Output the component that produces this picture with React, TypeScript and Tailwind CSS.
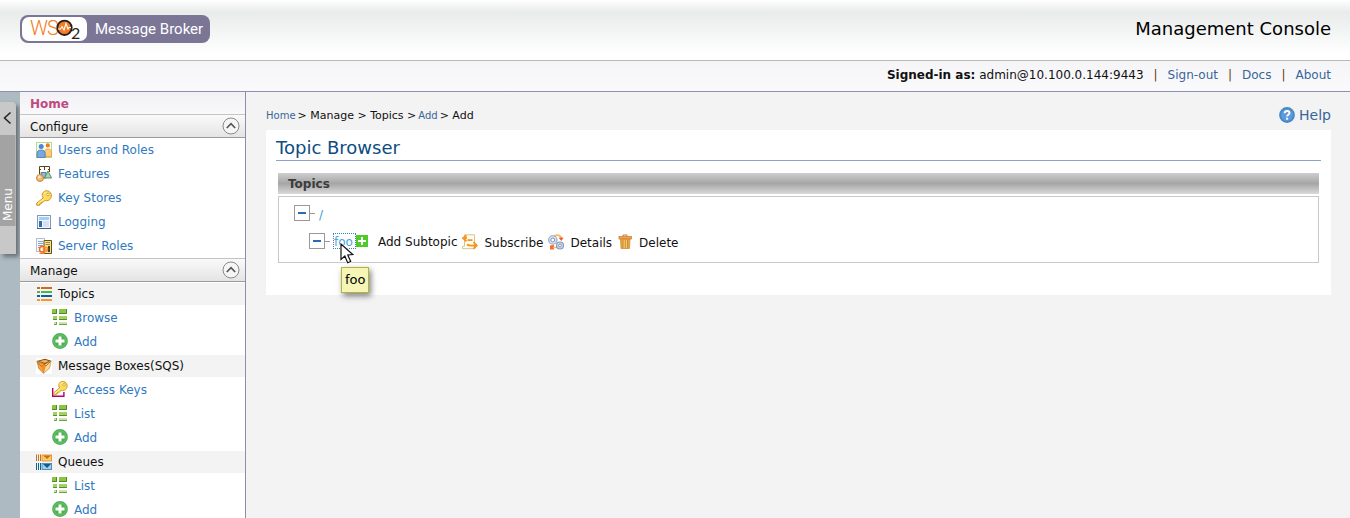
import type { ReactNode } from "react";

type IconProps = { className?: string };

function Svg({ children, size = "size-4" }: { children: ReactNode; size?: string }) {
  return (
    <svg viewBox="0 0 16 16" aria-hidden="true" className={`${size} shrink-0`}>
      {children}
    </svg>
  );
}

const UsersIcon = () => (
  <Svg>
    <rect x="0.5" y="0.5" width="15" height="15" fill="#fbfff5" stroke="#b5dc8e" />
    <circle cx="5.2" cy="4.5" r="2.5" fill="#4a8bd0" />
    <circle cx="11.8" cy="3.4" r="2.1" fill="#f07a1e" />
    <path d="M8.5 14.500V10c0-2 1.200-3 3.400-3s3.600 1 3.600 3v4.500z" fill="#ffcb74" stroke="#ef9a35" strokeWidth="0.8" />
    <path d="M1 15.600v-4c0-2.400 1.500-3.600 4.100-3.600s4.100 1.200 4.100 3.600v4z" fill="#7aa7de" stroke="#3c74b8" strokeWidth="0.8" />
  </Svg>
);

const FeaturesIcon = () => (
  <Svg>
    <path d="M3.500 8V.5h10V6M8.500.5V4M3.500 3.500h1.500M12 3.500h1.500" fill="none" stroke="#604016" />
    <path d="M5 6.500h5v5.500H5z" fill="#8dbbe0" stroke="#35688f" strokeWidth="0.8" />
    <path d="M12 5l3.600 7H8.500z" fill="#a8d3b0" stroke="#3f7a52" strokeWidth="0.8" />
    <circle cx="4" cy="12" r="3.500" fill="#f4b872" stroke="#b8742a" strokeWidth="0.8" />
    <circle cx="3.200" cy="11" r="1.400" fill="#fde5c4" />
  </Svg>
);

const KeyShape = () => (
  <>
    <path
      d="M7.200 7.900.7 13.200v2h3v-1.300h1.500v-1.400h1.600l2-2c2.200.7 4.600-.1 5.900-2.100 1.400-2.300.8-5.300-1.400-6.900C11 .1 8.100.6 6.900 2.900c-1 1.700-.8 3.500.3 5z"
      fill="#ffdc58"
      stroke="#c4952e"
    />
    <path d="M7.800 4.200c.5-1.300 1.400-2 2.800-2.100M2 13.500l5.500-4.500" stroke="#fff3ae" fill="none" />
    <circle cx="12" cy="4.500" r="1.300" fill="#fff" stroke="#b6892a" strokeWidth="0.7" />
  </>
);

const KeyIcon = () => (
  <Svg>
    <KeyShape />
  </Svg>
);

const AccessKeyIcon = () => (
  <Svg>
    <path d="M.7 7v8.300h11.200V11" fill="none" stroke="#b3006b" strokeWidth="1.400" />
    <g transform="translate(1 -0.300) scale(0.920)">
      <KeyShape />
    </g>
  </Svg>
);

const LoggingIcon = () => (
  <Svg>
    <rect x="1.500" y="1.500" width="13" height="13" fill="#f3f8ff" stroke="#8298b8" />
    <path d="M1 14.500h14" stroke="#465f8a" />
    <rect x="3" y="3" width="10" height="3" fill="#a3cdf5" />
    <rect x="3" y="7" width="3" height="6" fill="#346cb0" />
    <rect x="7" y="7" width="6" height="6" fill="#d5e2f3" />
  </Svg>
);

const ServerRolesIcon = () => (
  <Svg>
    <rect x="0.500" y="0.500" width="8" height="13" fill="#f7faff" stroke="#b3c0d2" />
    <path d="M2 3.500h5M2 5.500h5M2 7.500h5M2 9.500h2" stroke="#86a2c6" />
    <path d="M8 2.500h7.500v13H8z" fill="#f8e08c" stroke="#63531a" />
    <path d="M9.500 4.500h4.500M9.500 6.500h4.500M10 12h3" stroke="#a08a3a" />
    <rect x="12" y="8" width="2" height="6" fill="#4a3e14" />
    <circle cx="6.200" cy="11.300" r="2.700" fill="none" stroke="#f26a1b" strokeWidth="1.500" />
    <path d="M3.500 15.300h5.500" stroke="#f26a1b" strokeWidth="1.200" />
    <circle cx="9.500" cy="11.300" r="2.200" fill="none" stroke="#f78d3d" strokeWidth="1.200" />
  </Svg>
);

const TopicsIcon = () => (
  <Svg>
    <path d="M1 2h3M5 2h11" stroke="#cf6c1c" strokeWidth="2" />
    <path d="M1 6h3M5 6h11" stroke="#4bb748" strokeWidth="2" />
    <path d="M1 10h3M5 10h11" stroke="#0960a8" strokeWidth="2" />
    <path d="M1 14h3M5 14h11" stroke="#f89a1f" strokeWidth="2" />
  </Svg>
);

const ListIcon = () => (
  <Svg>
    <path d="M0 0h5v5H0zM7 0h8v5H7z" fill="#8bc53f" />
    <path d="M0 4.500h4.500V0M7 4.500h7.500V0" fill="none" stroke="#4d8a2a" />
    <path d="M1 7h4v4H1zM7 7h8v4H7z" fill="#a5d163" />
    <path d="M1 10.500h4M7 10.500h8" stroke="#568f33" />
    <path d="M2 13h3v3H2zM7 13h8v3H7z" fill="#c9e5a4" />
    <path d="M2 15.500h2.500V13M7 15.500h8" fill="none" stroke="#6e9e4a" />
  </Svg>
);

const AddIcon = () => (
  <Svg>
    <circle cx="8" cy="8" r="7.900" fill="#4bb04f" />
    <circle cx="8" cy="8" r="6.200" fill="none" stroke="#72c474" />
    <path d="M8 3.500v9M3.500 8h9" stroke="#fff" strokeWidth="3" />
  </Svg>
);

const BoxIcon = () => (
  <Svg>
    <rect width="16" height="16" fill="#fff" />
    <path d="M.8 3 9 .8l6.200 2L9.500 6.500z" fill="#7a4618" />
    <path d="M3 3.200 9 1.800l4 1.200-4 2z" fill="#f0b45c" />
    <path d="M.8 3 9 6.300 7.500 15.300 2.800 10.500z" fill="#f9a13a" stroke="#a8641f" strokeWidth="0.600" />
    <path d="M15.200 2.800 9 6.300 7.500 15.300l6-5z" fill="#ffd98a" stroke="#b9772c" strokeWidth="0.600" />
    <path d="m1.500 4 4 4.500 3-2 1.500 1.500 4.500-4.500" fill="none" stroke="#8e4f1a" strokeWidth="0.700" />
    <path d="m5.500 8.500 2 5.500L10 8 8.500 6.500z" fill="#f68a2c" />
  </Svg>
);

const QueuesIcon = () => (
  <Svg>
    <path d="M.5 0.500v6.500M2.500 0.500v6.500M4.500 0.500v6.500" stroke="#cf6c1c" />
    <rect x="6" y="1" width="9.600" height="6" fill="#f7cf66" stroke="#e38b2e" strokeWidth="0.800" />
    <path d="M7 1.500h8L11 5z" fill="#cf6c1c" />
    <path d="M.5 9v7M2.500 9v7M4.500 9v7" stroke="#0a6794" />
    <rect x="6" y="9.500" width="9.600" height="6" fill="#a9cde6" stroke="#2e7fac" strokeWidth="0.800" />
    <path d="M7 10h8l-4 4z" fill="#075f8e" />
  </Svg>
);

const PlusIcon = () => (
  <svg viewBox="0 0 12 12" aria-hidden="true" className="size-3 shrink-0">
    <rect width="12" height="12" fill="#4ccb29" />
    <path d="M6 2v8M2 6h8" stroke="#fff" strokeWidth="2" />
  </svg>
);

const SubscribeIcon = () => (
  <Svg>
    <path d="M2.500.8h10v11.700l-1 2.200h-11v-2.500h2z" fill="#fffdf4" stroke="#d9c48c" />
    <path d="M4.500 1.500 1 4.200l3.500 3M1 4.200h4M5.500 6.200h5" fill="none" stroke="#f7941d" strokeWidth="1.800" />
    <path d="M5 10.500c1.500 1.500 4 1 6.500 1h3M11.500 8l3.300 3.500-3.300 3.300" fill="none" stroke="#f7941d" strokeWidth="1.800" />
  </Svg>
);

const DetailsIcon = () => (
  <Svg>
    <path d="M6.500 1.800c4-1.500 6.500 0 7 3.200" fill="none" stroke="#fbb85c" strokeWidth="1.800" />
    <path d="m10.500 3.800 5-.300-2 3.500z" fill="#ee5a38" />
    <path d="M2 11.500 6 11v4.500H2z" fill="#f26b3c" />
    <path d="M5 13.500h4" stroke="#fbb85c" strokeWidth="1.600" />
    <circle cx="4.800" cy="6" r="4.200" fill="#d8e2f1" stroke="#8fa3c4" strokeWidth="1.100" />
    <circle cx="4.800" cy="6" r="1.900" fill="#fff" stroke="#7f95ba" />
    <circle cx="12" cy="11.500" r="3.500" fill="#cdd9ea" stroke="#8398bb" strokeWidth="1.100" />
    <circle cx="12" cy="11.500" r="1.400" fill="#fff" stroke="#7f95ba" />
  </Svg>
);

const TrashIcon = () => (
  <Svg>
    <path d="M6 2.500V1h4v1.500" fill="none" stroke="#c87624" />
    <rect x="2" y="2.500" width="12.500" height="2.500" fill="#f1a451" stroke="#cb7526" strokeWidth="0.700" />
    <path d="M3.500 5h9.500l-.500 9.500h-8.500z" fill="#e6a445" stroke="#ce8428" strokeWidth="0.700" />
    <path d="M6 6v8M8.200 6v8M10.500 6v8" stroke="#c08a30" strokeWidth="0.800" />
    <path d="M7.200 6v8M9.400 6v8" stroke="#f7d585" strokeWidth="0.800" />
  </Svg>
);

const HelpIcon = () => (
  <Svg>
    <circle cx="8" cy="8" r="7.900" fill="#4489cb" />
    <circle cx="8" cy="8" r="6" fill="#5d9ad6" />
    <path d="M5.700 6.300c0-1.500.9-2.300 2.400-2.300s2.400.8 2.400 2c0 1.800-2.400 1.800-2.400 3.600" fill="none" stroke="#fff" strokeWidth="1.900" />
    <rect x="7.100" y="10.700" width="2" height="2" fill="#fff" />
  </Svg>
);

const CollapseIcon = () => (
  <svg viewBox="0 0 18 18" aria-hidden="true" className="size-[18px]">
    <circle cx="9" cy="9" r="8" fill="#f5f5f5" stroke="#8a8a8a" />
    <path d="m4.800 11 4.200-4.300 4.200 4.300" fill="none" stroke="#555" strokeWidth="1.700" />
  </svg>
);

const CursorIcon = ({ className }: IconProps) => (
  <svg viewBox="0 0 14 22" aria-hidden="true" className={className}>
    <path d="M1 1v15.500l3.800-3.400 2.900 6.700 3-1.300-2.900-6.500 5-.400z" fill="#111" stroke="#fff" strokeWidth="2.200" />
    <path d="M1 1v15.500l3.800-3.400 2.900 6.700 3-1.300-2.900-6.500 5-.400z" fill="#fff" stroke="#111" strokeWidth="1.200" />
  </svg>
);

function Logo() {
  return (
    <a href="#home" className="flex h-7 w-[190px] items-center rounded-[8px] bg-[#7b7596] p-[2px] text-white">
      <svg viewBox="0 0 65 24" role="img" aria-label="WSO2" className="h-6 w-[65px] shrink-0 rounded-[7px] bg-white">
        <g fill="#f47b20" fontFamily="Roboto, sans-serif" fontWeight="300" fontSize="20">
          <text x="8" y="17.500">W</text>
          <text x="25" y="17.500">S</text>
        </g>
        <circle cx="42.500" cy="10.800" r="7.200" fill="#f47b20" stroke="#231f20" strokeWidth="1.800" />
        <path d="M36 12h2.500l1.500-2.500 2 3.500L44 6.500l2 5.500 1-1.500h2" fill="none" stroke="#fff" strokeWidth="1.100" />
        <text x="49" y="21.500" fill="#231f20" fontFamily="Lato, sans-serif" fontSize="16">2</text>
      </svg>
      <span className="pl-2 font-[Roboto,sans-serif] text-[15px] whitespace-nowrap">Message Broker</span>
    </a>
  );
}

type Entry = { label: string; icon: ReactNode };

const configureItems: Entry[] = [
  { label: "Users and Roles", icon: <UsersIcon /> },
  { label: "Features", icon: <FeaturesIcon /> },
  { label: "Key Stores", icon: <KeyIcon /> },
  { label: "Logging", icon: <LoggingIcon /> },
  { label: "Server Roles", icon: <ServerRolesIcon /> },
];

const manageGroups: (Entry & { items: Entry[] })[] = [
  {
    label: "Topics",
    icon: <TopicsIcon />,
    items: [
      { label: "Browse", icon: <ListIcon /> },
      { label: "Add", icon: <AddIcon /> },
    ],
  },
  {
    label: "Message Boxes(SQS)",
    icon: <BoxIcon />,
    items: [
      { label: "Access Keys", icon: <AccessKeyIcon /> },
      { label: "List", icon: <ListIcon /> },
      { label: "Add", icon: <AddIcon /> },
    ],
  },
  {
    label: "Queues",
    icon: <QueuesIcon />,
    items: [
      { label: "List", icon: <ListIcon /> },
      { label: "Add", icon: <AddIcon /> },
    ],
  },
];

function SectionHeader({ title }: { title: string }) {
  return (
    <h2 className="flex h-6 items-center justify-between border-t border-b border-t-[#c4c4c8] border-b-[#9a9a9a] bg-linear-to-b from-[#fafafa] to-[#e4e4e4] pr-[5px] pl-[10px]">
      <span className="pt-px">{title}</span>
      <button type="button" aria-label={`Collapse ${title}`}>
        <CollapseIcon />
      </button>
    </h2>
  );
}

function MenuLink({ item, nested }: { item: Entry; nested?: boolean }) {
  return (
    <li>
      <a href="#item" className={`flex h-6 items-center gap-[6px] text-[#2f7abf] ${nested ? "pl-8" : "pl-4"}`}>
        {item.icon}
        <span className={nested ? "pt-px" : ""}>{item.label}</span>
      </a>
    </li>
  );
}

function Sidebar() {
  return (
    <nav className="w-[226px] shrink-0 overflow-hidden border-r border-[#8e8ca8] bg-white">
      <a href="#home" className="flex h-[22px] items-center bg-linear-to-b from-[#f1f1f5] to-[#f9f9fb] pt-px pl-[10px] font-bold text-[#c04a80]">
        Home
      </a>
      <SectionHeader title="Configure" />
      <ul>
        {configureItems.map((item) => (
          <MenuLink key={item.label} item={item} />
        ))}
      </ul>
      <SectionHeader title="Manage" />
      <ul className="flex flex-col gap-[2px] pt-px">
        {manageGroups.map((group) => (
          <li key={group.label}>
            <div className="flex h-[22px] items-center gap-[6px] bg-[#f3f3f3] pl-4">
              {group.icon}
              {group.label}
            </div>
            <ul>
              {group.items.map((item) => (
                <MenuLink key={item.label} item={item} nested />
              ))}
            </ul>
          </li>
        ))}
      </ul>
    </nav>
  );
}

function TreeToggle({ label }: { label: string }) {
  return (
    <span className="flex shrink-0 items-center">
      <button type="button" aria-label={label} className="flex size-4 items-center justify-center border border-[#999] bg-white">
        <span className="h-[2px] w-2 bg-[#2b6cb5]" />
      </button>
      <span className="h-px w-[5px] bg-[#999]" />
    </span>
  );
}

const Divider = () => <span className="text-[#5c3a10]">|</span>;

const actions: Entry[] = [
  { label: "Subscribe", icon: <SubscribeIcon /> },
  { label: "Details", icon: <DetailsIcon /> },
  { label: "Delete", icon: <TrashIcon /> },
];

export default function App() {
  return (
    <div className="flex h-screen flex-col overflow-hidden bg-[#f3f3f3] font-['DejaVu_Sans',sans-serif] text-[12px] leading-4 text-[#111]">
      <header className="shrink-0">
        <div className="flex h-[61px] items-start justify-between border-b border-[#b9b9b9] bg-[linear-gradient(to_bottom,#fff_0px,#e9ebea_12px,#fff_54px)] px-5 pt-[15px] pr-[19px]">
          <Logo />
          <h1 className="text-[18px] leading-7 text-black">Management Console</h1>
        </div>
        <div className="flex h-[31px] items-center justify-end gap-[10px] border-b border-[#8e8eae] bg-linear-to-b from-[#f5f5f8] to-[#fafafc] pr-[19px] pb-[3px]">
          <span>
            <strong>Signed-in as:</strong> admin@10.100.0.144:9443
          </span>
          <Divider />
          <a href="#signout" className="text-[#386698]">Sign-out</a>
          <Divider />
          <a href="#docs" className="text-[#386698]">Docs</a>
          <Divider />
          <a href="#about" className="text-[#386698]">About</a>
        </div>
      </header>

      <div className="flex min-h-0 flex-1">
        <div className="w-5 shrink-0 bg-[#adbac2] pt-[10px]">
          <button
            type="button"
            className="flex h-[152px] w-4 flex-col items-center rounded-tr-[4px] bg-[#c8c8c8] text-white shadow-[3px_3px_4px_rgba(0,0,0,0.4)]"
          >
            <svg viewBox="0 0 16 33" aria-hidden="true" className="h-[33px] w-4 shrink-0">
              <path d="m10.500 10.500-6 5.500 6 5.500" fill="none" stroke="#222" strokeWidth="1.500" />
            </svg>
            <span className="flex h-[91px] w-4 shrink-0 rotate-180 items-center border-l border-[#b4b4b4] bg-[#a3a3a3] pt-[5px] [writing-mode:vertical-rl]">
              <span className="w-full text-left">Menu</span>
            </span>
          </button>
        </div>
        <Sidebar />

        <main className="min-w-0 flex-1 pt-[14px] pr-[19px] pl-5">
          <div className="flex h-6 items-start justify-between">
            <nav aria-label="Breadcrumb" className="flex items-center gap-[2px] text-[11px] leading-[18px]">
              <a href="#home" className="text-[10px] text-[#386698]">Home</a>
              <span className="pt-px">&gt; Manage &gt; Topics &gt;</span>
              <a href="#add" className="pt-px text-[10px] text-[#386698]">Add</a>
              <span className="pt-px">&gt; Add</span>
            </nav>
            <a href="#help" className="flex items-center gap-1 text-[14px] leading-[18px] text-[#386698]">
              <HelpIcon />
              Help
            </a>
          </div>

          <section className="bg-white px-[10px] pb-8">
            <h2 className="h-[31px] border-b border-[#8fa3c6] pt-[6px] text-[18px] leading-6 text-[#0d4d81]">Topic Browser</h2>
            <div className="px-[2px] pt-3">
              <h3 className="flex h-[21px] items-center bg-[linear-gradient(to_bottom,#cecece,#a6a6a6_50%,#dadada)] pl-[10px] font-bold text-[#3c3c3c]">
                Topics
              </h3>
              <div className="mt-[2px] h-[67px] border border-[#c8c8c8] pt-2 pl-[15px]">
                <div className="flex h-4 items-center gap-1">
                  <TreeToggle label="Collapse root" />
                  <a href="#root" className="pt-[3px] text-[#3c9bd6]">/</a>
                </div>
                <div className="mt-3 flex h-4 items-center pl-[15px]">
                  <TreeToggle label="Collapse foo" />
                  <span className="relative ml-[3px]">
                    <a href="#foo" className="flex h-4 w-[23px] items-center border border-dotted border-[#2d87c3] pt-[2px] text-[#4ba6de]">
                      foo
                    </a>
                    <CursorIcon className="absolute top-[10px] left-[7px] z-10 h-[22px] w-[14px]" />
                    <span
                      role="tooltip"
                      className="absolute top-[34px] left-2 border border-[#b4b43c] bg-[#f5f5b5] px-[3px] py-1 text-[13px] leading-4 text-black shadow-[2px_3px_6px_rgba(0,0,0,0.5)]"
                    >
                      foo
                    </span>
                  </span>
                  <a href="#add-subtopic" className="flex items-center gap-[10px] whitespace-nowrap">
                    <PlusIcon />
                    <span className="pt-[2px]">Add Subtopic</span>
                  </a>
                  {actions.map((action) => (
                    <a key={action.label} href="#action" className="ml-[5px] flex items-center gap-[6px] pt-[2px] whitespace-nowrap">
                      {action.icon}
                      <span className="pt-px">{action.label}</span>
                    </a>
                  ))}
                </div>
              </div>
            </div>
          </section>
        </main>
      </div>
    </div>
  );
}
